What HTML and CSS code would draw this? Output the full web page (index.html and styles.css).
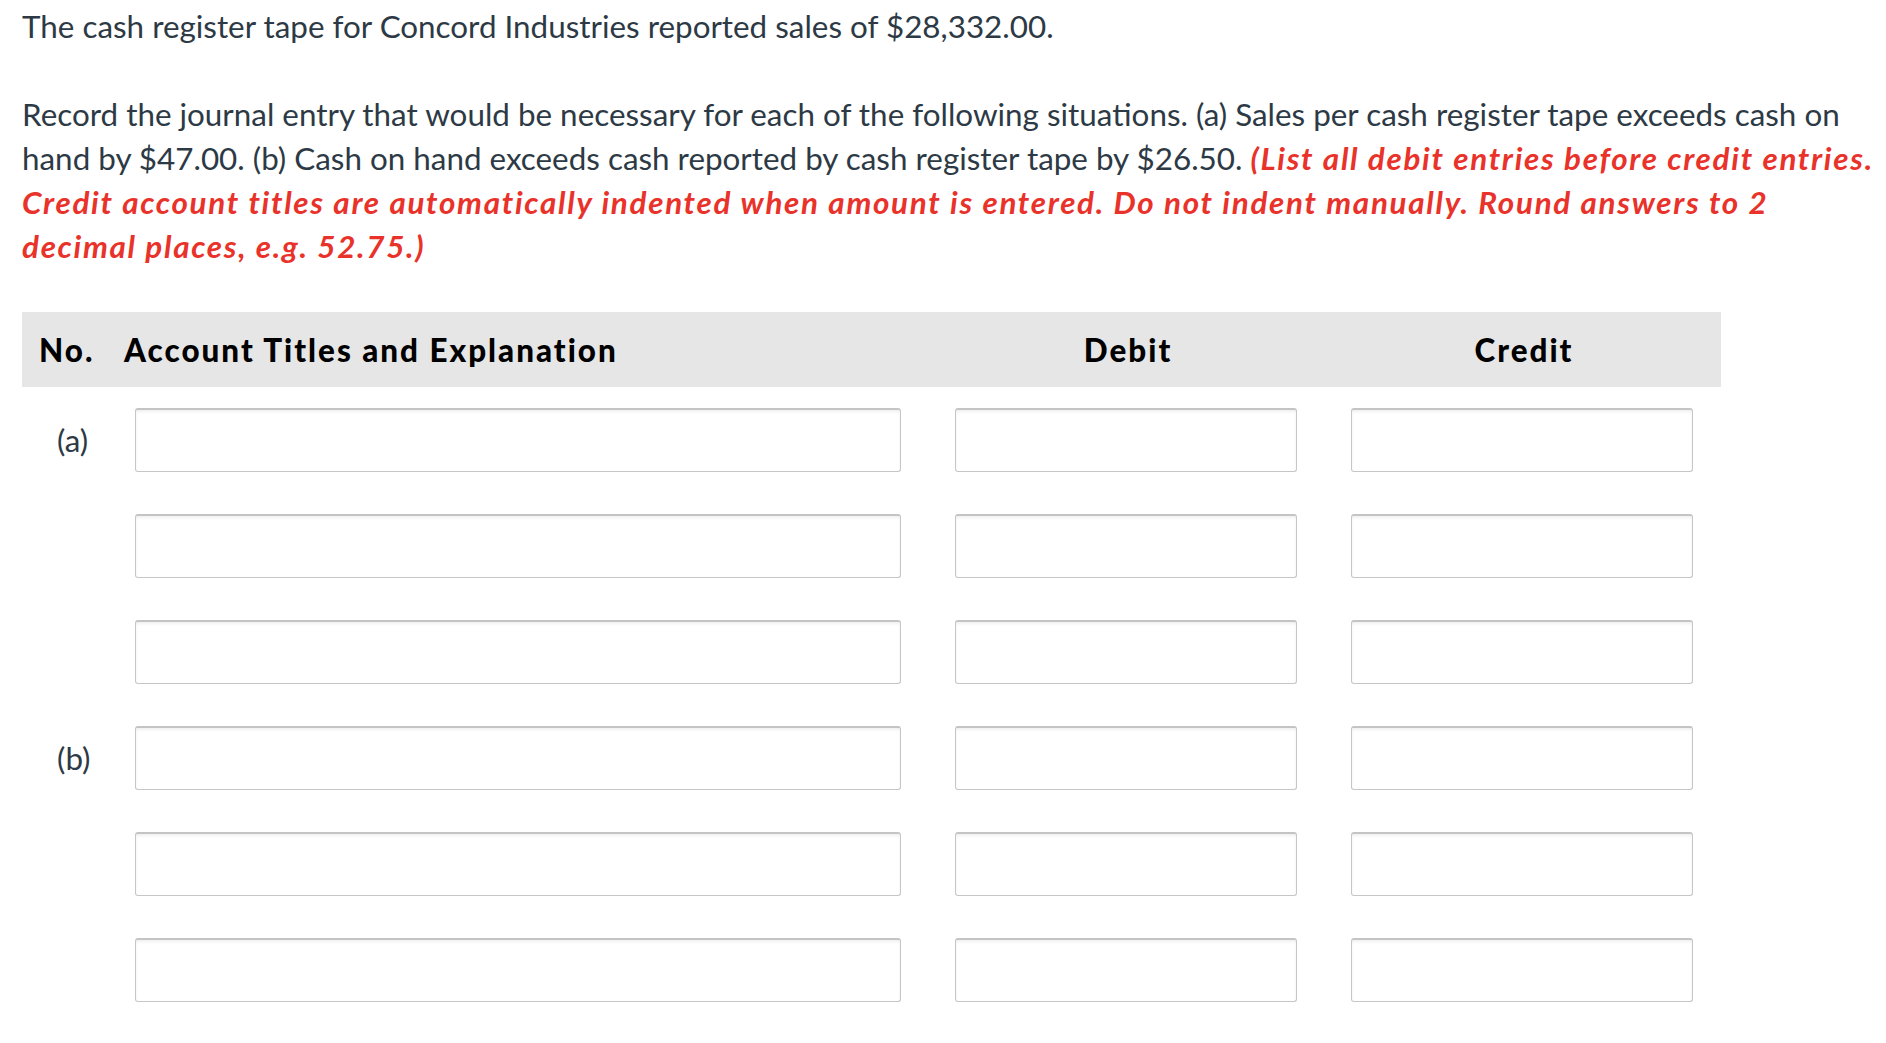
FILE: index.html
```html
<!DOCTYPE html>
<html>
<head>
<meta charset="utf-8">
<link rel="stylesheet" href="styles.css">
</head>
<body>
<div class="page">
  <p class="intro">The cash register tape for Concord Industries reported sales of $28,332.00.</p>
  <p class="question">Record the journal entry that would be necessary for each of the following situations. (a) Sales per cash register tape exceeds cash on hand by $47.00. (b) Cash on hand exceeds cash reported by cash register tape by $26.50. <em class="note">(List all debit entries before credit entries. Credit account titles are automatically indented when amount is entered. Do not indent manually. Round answers to 2 decimal places, e.g. 52.75.)</em></p>

  <div class="journal">
    <div class="head">
      <div class="h-no">No.</div>
      <div class="h-acct">Account Titles and Explanation</div>
      <div class="h-amt">Debit</div>
      <div class="h-amt">Credit</div>
    </div>
    <div class="row">
      <div class="label">(a)</div>
      <div class="box acct"></div>
      <div class="box amt"></div>
      <div class="box amt"></div>
    </div>
    <div class="row">
      <div class="label"></div>
      <div class="box acct"></div>
      <div class="box amt"></div>
      <div class="box amt"></div>
    </div>
    <div class="row">
      <div class="label"></div>
      <div class="box acct"></div>
      <div class="box amt"></div>
      <div class="box amt"></div>
    </div>
    <div class="row">
      <div class="label">(b)</div>
      <div class="box acct"></div>
      <div class="box amt"></div>
      <div class="box amt"></div>
    </div>
    <div class="row">
      <div class="label"></div>
      <div class="box acct"></div>
      <div class="box amt"></div>
      <div class="box amt"></div>
    </div>
    <div class="row">
      <div class="label"></div>
      <div class="box acct"></div>
      <div class="box amt"></div>
      <div class="box amt"></div>
    </div>
  </div>
</div>
</body>
</html>
```

FILE: styles.css
```css
html, body {
  margin: 0;
  padding: 0;
  background: #ffffff;
}

.page {
  padding: 4px 0 0 22px;
  font-family: Lato, "Liberation Sans", sans-serif;
  font-size: 31.4px;
  line-height: 44px;
  color: #2d3a45;
  width: 1864px;
}

.intro {
  margin: 0 0 44px 0;
}

.question {
  margin: 0 0 44px 0;
  width: 1864px;
}

.note {
  color: #e8322a;
  font-weight: 700;
  font-style: italic;
  letter-spacing: 1.7px;
}

.journal {
  width: 1699px;
}

.head {
  display: grid;
  grid-template-columns: 31px 779px 342px 342px;
  column-gap: 54px;
  align-items: center;
  height: 75px;
  padding-left: 17px;
  background: #e6e6e6;
  color: #000000;
  font-weight: 900;
  letter-spacing: 2px;
  margin-bottom: 21px;
}

.h-no {
  white-space: nowrap;
}

.h-amt {
  text-align: center;
}

.row {
  display: grid;
  grid-template-columns: 59px 766px 342px 342px;
  column-gap: 54px;
  align-items: center;
  height: 64px;
  margin-bottom: 42px;
}

.label {
  padding-left: 35px;
  white-space: nowrap;
}

.box {
  height: 64px;
  box-sizing: border-box;
  border: 1px solid #c6c6c6;
  border-top: 2px solid #c4c4c4;
  border-radius: 3px;
  box-shadow: inset 0 2px 3px rgba(0, 0, 0, 0.06);
  background: #ffffff;
}
```
